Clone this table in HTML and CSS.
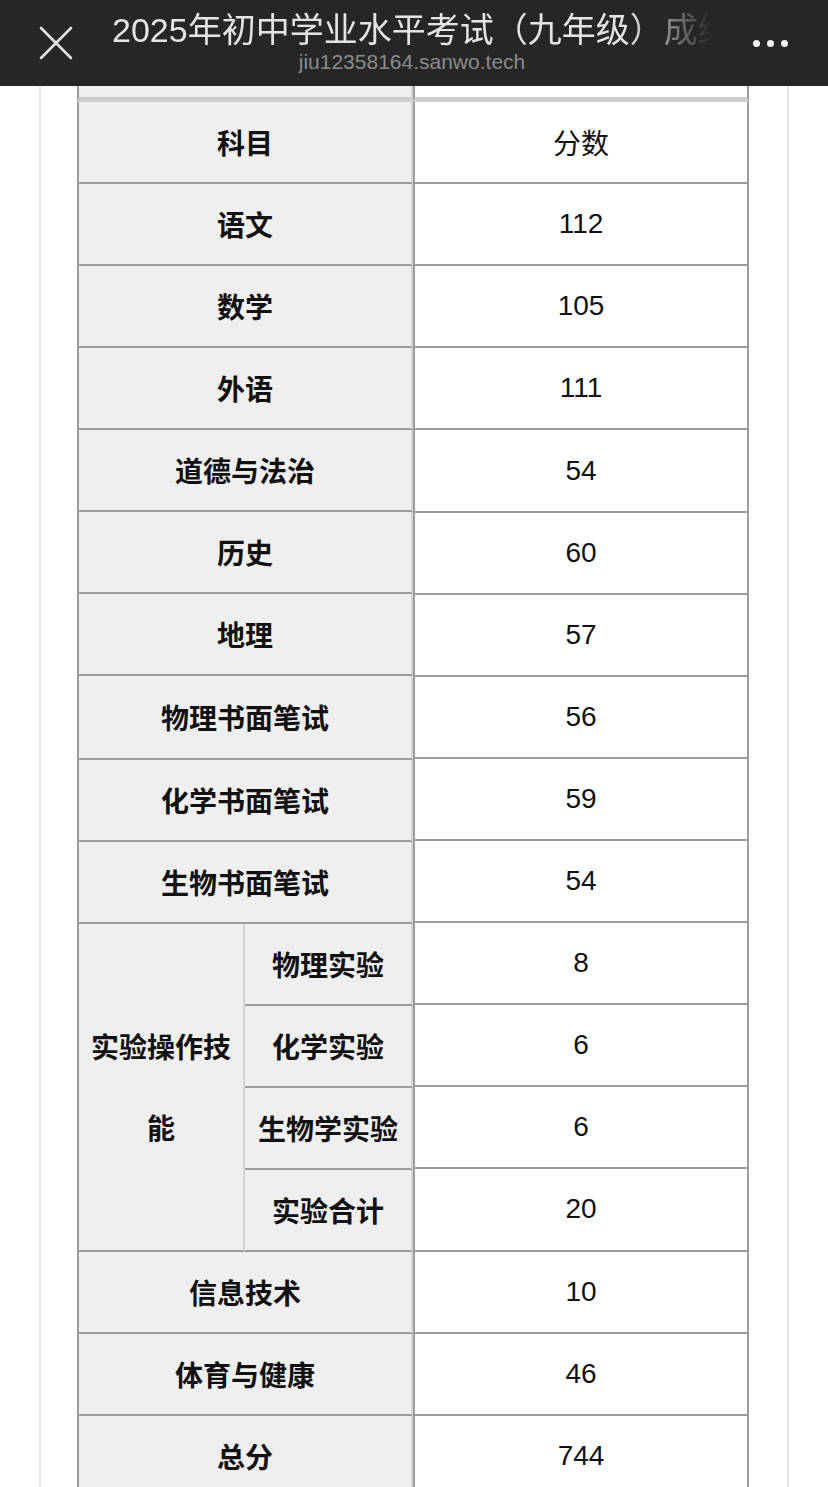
FILE: index.html
```html
<!DOCTYPE html>
<html lang="zh-CN">
<head>
<meta charset="utf-8">
<title>2025年初中学业水平考试（九年级）成绩查询</title>
<link rel="stylesheet" href="styles.css">
</head>
<body>
<header class="topbar">
  <div class="topbar-close">
    <svg width="34" height="34" viewBox="0 0 34 34" aria-hidden="true">
      <path d="M2 2 L32 32 M32 2 L2 32" stroke="#e2e2e2" stroke-width="2.6" stroke-linecap="round" fill="none"/>
    </svg>
  </div>
  <div class="topbar-titles">
    <div class="topbar-title">2025年初中学业水平考试（九年级）成绩查询</div>
    <div class="topbar-url">jiu12358164.sanwo.tech</div>
  </div>
  <div class="topbar-more">
    <span class="dot"></span><span class="dot"></span><span class="dot"></span>
  </div>
</header>

<main class="sheet">
  <div class="tables">
    <table class="subjects">
      <colgroup><col class="col-a"><col class="col-b"></colgroup>
      <tr class="stub"><td colspan="2"></td></tr>
      <tr><td colspan="2">科目</td></tr>
      <tr><td colspan="2">语文</td></tr>
      <tr><td colspan="2">数学</td></tr>
      <tr><td colspan="2">外语</td></tr>
      <tr><td colspan="2">道德与法治</td></tr>
      <tr><td colspan="2">历史</td></tr>
      <tr><td colspan="2">地理</td></tr>
      <tr class="tall"><td colspan="2">物理书面笔试</td></tr>
      <tr><td colspan="2">化学书面笔试</td></tr>
      <tr><td colspan="2">生物书面笔试</td></tr>
      <tr><td rowspan="4" class="group">实验操作技能</td><td class="sub">物理实验</td></tr>
      <tr><td class="sub">化学实验</td></tr>
      <tr><td class="sub">生物学实验</td></tr>
      <tr><td class="sub">实验合计</td></tr>
      <tr><td colspan="2">信息技术</td></tr>
      <tr><td colspan="2">体育与健康</td></tr>
      <tr><td colspan="2">总分</td></tr>
    </table>
    <table class="scores">
      <tr class="stub"><td></td></tr>
      <tr><td class="head">分数</td></tr>
      <tr><td>112</td></tr>
      <tr><td>105</td></tr>
      <tr><td>111</td></tr>
      <tr><td>54</td></tr>
      <tr><td>60</td></tr>
      <tr><td>57</td></tr>
      <tr><td>56</td></tr>
      <tr><td>59</td></tr>
      <tr><td>54</td></tr>
      <tr><td>8</td></tr>
      <tr><td>6</td></tr>
      <tr><td>6</td></tr>
      <tr><td>20</td></tr>
      <tr><td>10</td></tr>
      <tr><td>46</td></tr>
      <tr><td>744</td></tr>
    </table>
  </div>
</main>
</body>
</html>
```
FILE: styles.css
```css
html, body {
  margin: 0;
  padding: 0;
  background: #ffffff;
}
body {
  width: 828px;
  height: 1487px;
  overflow: hidden;
  font-family: "Liberation Sans", "Noto Sans CJK SC", sans-serif;
  color: #111111;
}

/* ---------- top bar ---------- */
.topbar {
  display: flex;
  align-items: center;
  height: 86px;
  background: #262626;
}
.topbar-close {
  width: 112px;
  display: flex;
  justify-content: center;
  align-items: center;
  padding-top: 0;
}
.topbar-titles {
  width: 600px;
  display: flex;
  flex-direction: column;
  align-items: center;
  margin-top: -2px;
}
.topbar-title {
  align-self: stretch;
  font-size: 34px;
  line-height: 40px;
  color: #e4e4e4;
  white-space: nowrap;
  overflow: hidden;
  -webkit-mask-image: linear-gradient(to right, #000 0, #000 86%, transparent 100%);
  mask-image: linear-gradient(to right, #000 0, #000 86%, transparent 100%);
}
.topbar-url {
  font-size: 21px;
  line-height: 24px;
  color: #8b8b8b;
  white-space: nowrap;
}
.topbar-more {
  flex: 1;
  display: flex;
  justify-content: center;
  align-items: center;
  gap: 7px;
}
.dot {
  width: 7px;
  height: 7px;
  border-radius: 50%;
  background: #f2f2f2;
}

/* ---------- sheet ---------- */
.sheet {
  margin-left: 39px;
  width: 746px;
  height: 1401px;
  border-left: 2px solid #e6e6e6;
  border-right: 2px solid #e6e6e6;
  padding: 0 38px 0 36px;
  box-sizing: content-box;
  width: 672px;
}
.tables {
  display: flex;
}
table {
  border-collapse: separate;
  border-spacing: 0;
  table-layout: fixed;
}
td {
  padding: 0;
  text-align: center;
  vertical-align: middle;
  font-size: 28px;
}
tr {
  height: 82px;
}
tr.stub {
  height: 16px;
}
tr.tall {
  height: 84px;
}

.subjects {
  width: 336px;
  background: #efefef;
}
.col-a { width: 168px; }
.col-b { width: 168px; }
.subjects td {
  font-family: "Noto Sans CJK SC", sans-serif;
  font-weight: 700;
  border-left: 2px solid #9c9c9c;
  border-right: 2px solid #d4d4d4;
  border-bottom: 2px solid #9c9c9c;
}
.subjects td.sub {
  border-left: 0;
}
.subjects td.group {
  border-right: 2px solid #d4d4d4;
  line-height: 81px;
  padding: 0 10px;
}
.subjects tr.stub td,
.scores tr.stub td {
  border-bottom: 5px solid #cdcdcd;
}

.scores {
  width: 336px;
  background: #ffffff;
}
.scores td {
  border-left: 2px solid #9c9c9c;
  border-right: 2px solid #9c9c9c;
  border-bottom: 2px solid #9c9c9c;
  font-weight: 400;
}
.scores td.head {
  font-family: "Noto Sans CJK SC", sans-serif;
}
```
